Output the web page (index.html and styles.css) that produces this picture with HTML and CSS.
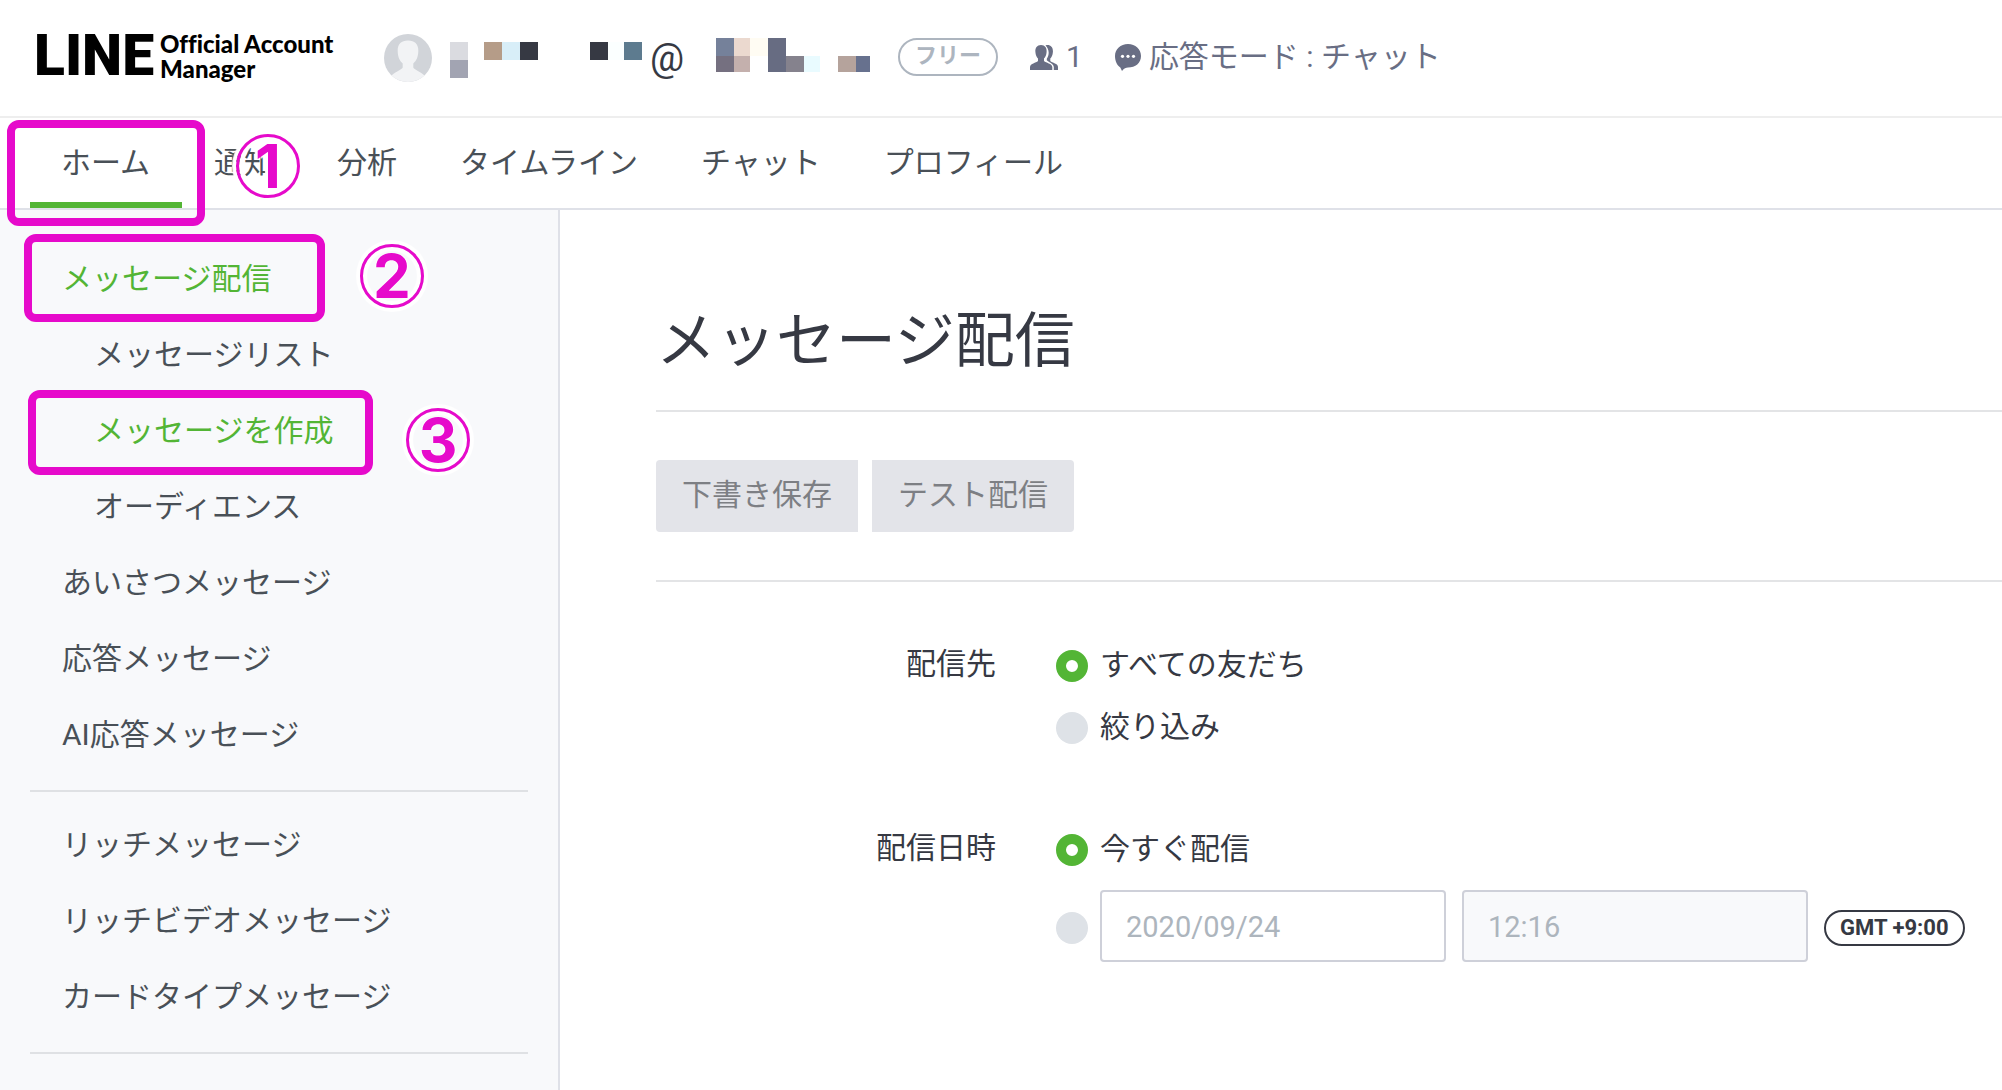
FILE: index.html
```html
<!DOCTYPE html>
<html lang="ja">
<head>
<meta charset="utf-8">
<meta name="viewport" content="width=device-width, initial-scale=1">
<title>LINE Official Account Manager</title>
<link rel="stylesheet" href="styles.css">
</head>
<body>
<header class="header">
  <a class="logo" href="#">
    <span class="logo-mark">LINE</span>
    <span class="logo-name">Official Account<br>Manager</span>
  </a>
  <div class="account">
    <svg class="avatar" viewBox="0 0 48 48" aria-hidden="true">
      <circle cx="24" cy="24" r="24" fill="#d1d4d9"/>
      <path d="M24 6.500C31 6.500 34.600 10.500 34.300 17C34.200 23 32.500 26.500 29.300 29.500V33.500C30 35.500 36 37.500 40.500 41.400A24 24 0 0 1 7.500 41.400C12 37.500 18 35.500 18.700 33.500V29.500C15.500 26.500 13.800 23 13.700 17C13.400 10.500 17 6.500 24 6.500Z" fill="#f2f3f5"/>
    </svg>
    <svg class="mosaic mosaic-name" viewBox="0 0 192 40" shape-rendering="crispEdges" aria-hidden="true">
      <path fill="#dadbe0" d="M0 4h18v18H0z"/><path fill="#a2a4b2" d="M0 22h18v18H0z"/>
      <path fill="#b59c88" d="M34 4h18v18H34z"/><path fill="#d8eef8" d="M52 4h18v18H52z"/><path fill="#363943" d="M70 4h18v18H70z"/>
      <path fill="#363943" d="M140 4h18v18h-18z"/><path fill="#fbffff" d="M158 4h16v18h-16z"/><path fill="#5d7b8f" d="M174 4h18v18h-18z"/>
    </svg>
    <span class="at">@</span>
    <svg class="mosaic mosaic-id" viewBox="0 0 154 40" shape-rendering="crispEdges" aria-hidden="true">
      <path fill="#75819a" d="M0 0h18v18H0z"/><path fill="#ebd9cf" d="M18 0h16v18H18z"/><path fill="#fffcf3" d="M34 0h18v18H34z"/>
      <path fill="#676c82" d="M52 0h18v34H52z"/><path fill="#757080" d="M0 18h18v16H0z"/><path fill="#c4b0ad" d="M18 18h16v16H18z"/>
      <path fill="#85828d" d="M70 18h18v16H70z"/><path fill="#e9fbff" d="M88 18h16v16H88z"/>
      <path fill="#b5a39c" d="M122 18h18v16h-18z"/><path fill="#67718e" d="M140 18h14v16h-14z"/>
    </svg>
  </div>
  <div class="status">
    <span class="plan">フリー</span>
    <span class="stat">
      <svg class="icon-friends" viewBox="0 0 28 25" aria-hidden="true">
        <path fill="#696e84" d="M11 0C15 0 17 3 16.600 7C16.400 10.500 15.200 12.300 14 13.500V16C16 18 22 18.500 22.300 22V25H0V22C.3 18.500 6 18 8 16V13.500C6.800 12.300 5.600 10.500 5.400 7C5 3 7 0 11 0Z"/>
        <path fill="#696e84" d="M15.500 .4C20 -1 23.300 2 22.900 7C22.700 10.500 21.500 12.300 20.300 13.500V16C22.300 18 28 18.500 28 22V25H23.800V22C23.500 18.500 19 17.300 16.800 15.200V13.700C20 9.500 18.800 3 15.500 .4Z"/>
      </svg>
      1
    </span>
    <span class="stat">
      <svg class="icon-chat" viewBox="0 0 26 27" aria-hidden="true">
        <path fill="#696e84" d="M13 0C20.500 0 26 5 26 12S20.500 23.500 13 23.500C11 23.500 9 24 7 27L5.300 23.400C2 21.300 0 17 0 12C0 5 5.500 0 13 0Z"/>
        <g fill="#fff"><circle cx="7.500" cy="12.300" r="1.600"/><circle cx="13" cy="12.300" r="1.600"/><circle cx="18.500" cy="12.300" r="1.600"/></g>
      </svg>
      応答モード : チャット
    </span>
  </div>
</header>

<nav class="tabs">
  <a class="tab tab-active" href="#">ホーム</a>
  <a class="tab" href="#">通知</a>
  <a class="tab" href="#">分析</a>
  <a class="tab" href="#">タイムライン</a>
  <a class="tab" href="#">チャット</a>
  <a class="tab" href="#">プロフィール</a>
</nav>

<div class="body">
  <nav class="sidebar">
    <ul class="menu">
      <li><a class="menu-link menu-active" href="#">メッセージ配信</a></li>
      <li><a class="menu-link menu-sub" href="#">メッセージリスト</a></li>
      <li><a class="menu-link menu-sub menu-active" href="#">メッセージを作成</a></li>
      <li><a class="menu-link menu-sub" href="#">オーディエンス</a></li>
      <li><a class="menu-link" href="#">あいさつメッセージ</a></li>
      <li><a class="menu-link" href="#">応答メッセージ</a></li>
      <li><a class="menu-link" href="#">AI応答メッセージ</a></li>
    </ul>
    <ul class="menu">
      <li><a class="menu-link" href="#">リッチメッセージ</a></li>
      <li><a class="menu-link" href="#">リッチビデオメッセージ</a></li>
      <li><a class="menu-link" href="#">カードタイプメッセージ</a></li>
    </ul>
  </nav>

  <main class="content">
    <h1 class="title">メッセージ配信</h1>
    <div class="actions">
      <button class="button button-first" type="button" disabled>下書き保存</button>
      <button class="button button-last" type="button" disabled>テスト配信</button>
    </div>
    <form class="form">
      <div class="field" role="radiogroup" aria-labelledby="target-label">
        <span class="field-label" id="target-label">配信先</span>
        <div class="options">
          <label class="option"><input class="radio" type="radio" name="target" checked><span class="option-text">すべての友だち</span></label>
          <label class="option"><input class="radio" type="radio" name="target"><span class="option-text">絞り込み</span></label>
        </div>
      </div>
      <div class="field" role="radiogroup" aria-labelledby="time-label">
        <span class="field-label" id="time-label">配信日時</span>
        <div class="options">
          <label class="option"><input class="radio" type="radio" name="time" checked><span class="option-text">今すぐ配信</span></label>
          <div class="schedule">
            <input class="radio" type="radio" name="time" aria-label="日時を指定">
            <input class="input" type="text" value="2020/09/24" aria-label="日付">
            <input class="input input-muted" type="text" value="12:16" aria-label="時刻">
            <span class="zone">GMT +9:00</span>
          </div>
        </div>
      </div>
    </form>
  </main>
</div>

<div class="mark-box mark-box-1"></div>
<div class="mark-box mark-box-2"></div>
<div class="mark-box mark-box-3"></div>
<span class="mark-number mark-number-1">1</span>
<span class="mark-number mark-number-2">2</span>
<span class="mark-number mark-number-3">3</span>
</body>
</html>
```
FILE: styles.css
```css
* {
  box-sizing: border-box;
}

body {
  position: relative;
  display: flex;
  flex-direction: column;
  min-height: 100vh;
  margin: 0;
  background: #fff;
  color: #363943;
  font-family: Roboto, "Noto Sans CJK JP", sans-serif;
  font-size: 30px;
  line-height: 44px;
}

a {
  color: inherit;
  text-decoration: none;
}

svg {
  display: block;
  flex: none;
}

/* Header */
.header {
  display: flex;
  align-items: center;
  height: 118px;
  padding: 0 34px;
  border-bottom: 2px solid #eee;
  white-space: nowrap;
}

.logo {
  display: flex;
  align-items: center;
  gap: 6px;
  width: 350px;
  padding-bottom: 4px;
  color: #000;
}

.logo-mark {
  font-size: 57px;
  font-weight: 900;
}

.logo-name {
  font-family: Lato, sans-serif;
  font-size: 24px;
  font-variant-ligatures: none;
  font-weight: 900;
  line-height: 25px;
}

.account {
  display: flex;
  align-items: center;
}

.avatar {
  width: 48px;
  height: 48px;
  margin-right: 18px;
}

.mosaic {
  height: 40px;
}

.mosaic-name {
  width: 192px;
}

.mosaic-id {
  width: 154px;
}

.at {
  width: 74px;
  padding-left: 8px;
  font-size: 38px;
}

.status {
  display: flex;
  align-items: center;
  gap: 32px;
  margin-left: 28px;
  padding-bottom: 2px;
}

.plan {
  width: 100px;
  height: 38px;
  border: 2px solid #adb5bf;
  border-radius: 19px;
  color: #adb5bf;
  font-size: 22px;
  font-weight: 700;
  line-height: 32px;
  text-align: center;
}

.stat {
  display: flex;
  align-items: center;
  gap: 8px;
  color: #696e84;
}

.icon-friends {
  width: 28px;
  height: 25px;
}

.icon-chat {
  width: 26px;
  height: 27px;
}

/* Tabs */
.tabs {
  display: flex;
  gap: 1px;
  height: 92px;
  padding-left: 30px;
  border-bottom: 2px solid #dfe1e8;
  color: #495057;
  white-space: nowrap;
}

.tab {
  padding: 23px 31px 17px;
  border-bottom: 6px solid transparent;
}

.tab-active {
  padding-right: 32px;
  border-color: #53b535;
}

/* Body */
.body {
  display: flex;
  flex: 1;
}

.sidebar {
  flex: none;
  width: 560px;
  padding: 30px 30px 0;
  border-right: 2px solid #dfe1e8;
  background: #f8f9fb;
  color: #495057;
}

.menu {
  margin: 0 0 14px;
  padding: 0 0 18px;
  border-bottom: 2px solid #dfe1e4;
  list-style: none;
}

.menu-link {
  display: block;
  padding: 17px 32px 15px;
}

.menu-sub {
  padding-left: 64px;
}

.menu-active {
  color: #53b535;
}

.content {
  flex: 1;
  padding-left: 96px;
}

.title {
  margin: 0;
  padding: 88px 0 24px;
  border-bottom: 2px solid #e3e4e6;
  font-size: 60px;
  font-weight: 400;
  line-height: 88px;
}

.actions {
  display: flex;
  gap: 14px;
  padding: 48px 0;
  border-bottom: 2px solid #e3e4e6;
}

.button {
  height: 72px;
  padding: 0 26px 2px;
  border: 0;
  background: #e3e4e9;
  color: #7d7f84;
  font: inherit;
}

.button-first {
  border-radius: 4px 0 0 4px;
}

.button-last {
  border-radius: 0 4px 4px 0;
}

/* Form */
.form {
  display: flex;
  flex-direction: column;
  gap: 74px;
  padding: 60px 0;
}

.field {
  display: flex;
  gap: 60px;
}

.field-label {
  flex: none;
  width: 340px;
  text-align: right;
}

.options {
  display: flex;
  flex-direction: column;
  gap: 14px;
}

.option,
.schedule {
  display: flex;
  align-items: center;
}

.option {
  height: 48px;
  gap: 12px;
}

.option-text {
  padding-bottom: 2px;
}

.schedule {
  padding-top: 2px;
}

.radio {
  flex: none;
  width: 32px;
  height: 32px;
  margin: 0;
  border-radius: 50%;
  background: #dee2e7;
  appearance: none;
}

.radio:checked {
  border: 10px solid #53b535;
  background: #fff;
}

.schedule .radio {
  margin: 4px 12px 0 0;
}

.input {
  width: 346px;
  height: 72px;
  margin-right: 16px;
  padding: 2px 24px 0;
  border: 2px solid #ced0d9;
  border-radius: 4px;
  background: #fff;
  color: #adb5bd;
  font: inherit;
  font-size: 29px;
}

.input-muted {
  background: #f8f9fb;
}

.zone {
  height: 36px;
  margin-top: 4px;
  padding: 0 14px;
  border: 2px solid #363943;
  border-radius: 18px;
  font-size: 22px;
  font-weight: 700;
  line-height: 32px;
  white-space: nowrap;
}

/* Numbered highlights drawn over the page */
.mark-box {
  position: absolute;
  border: 8px solid #e60acb;
  border-radius: 12px;
  pointer-events: none;
}

.mark-box-1 {
  top: 120px;
  left: 7px;
  width: 198px;
  height: 106px;
}

.mark-box-2 {
  top: 234px;
  left: 24px;
  width: 301px;
  height: 88px;
}

.mark-box-3 {
  top: 390px;
  left: 28px;
  width: 345px;
  height: 85px;
}

.mark-number {
  position: absolute;
  width: 64px;
  height: 64px;
  border: 3px solid #e60acb;
  border-radius: 50%;
  box-shadow: 0 0 1px 4px #fff, inset 0 0 1px 4px #fff;
  color: #e60acb;
  font-family: Inter, sans-serif;
  font-size: 60px;
  font-weight: 700;
  line-height: 58px;
  text-align: center;
  text-shadow: 1px 0 1px #fff, -1px 0 1px #fff;
}

.mark-number-1 {
  top: 134px;
  left: 236px;
  text-shadow: 3px 0 1px #fff, -3px 0 1px #fff, 6px 0 1px #fff, 9px 0 1px #fff;
}

.mark-number-2 {
  top: 244px;
  left: 360px;
}

.mark-number-3 {
  top: 408px;
  left: 406px;
}
```
